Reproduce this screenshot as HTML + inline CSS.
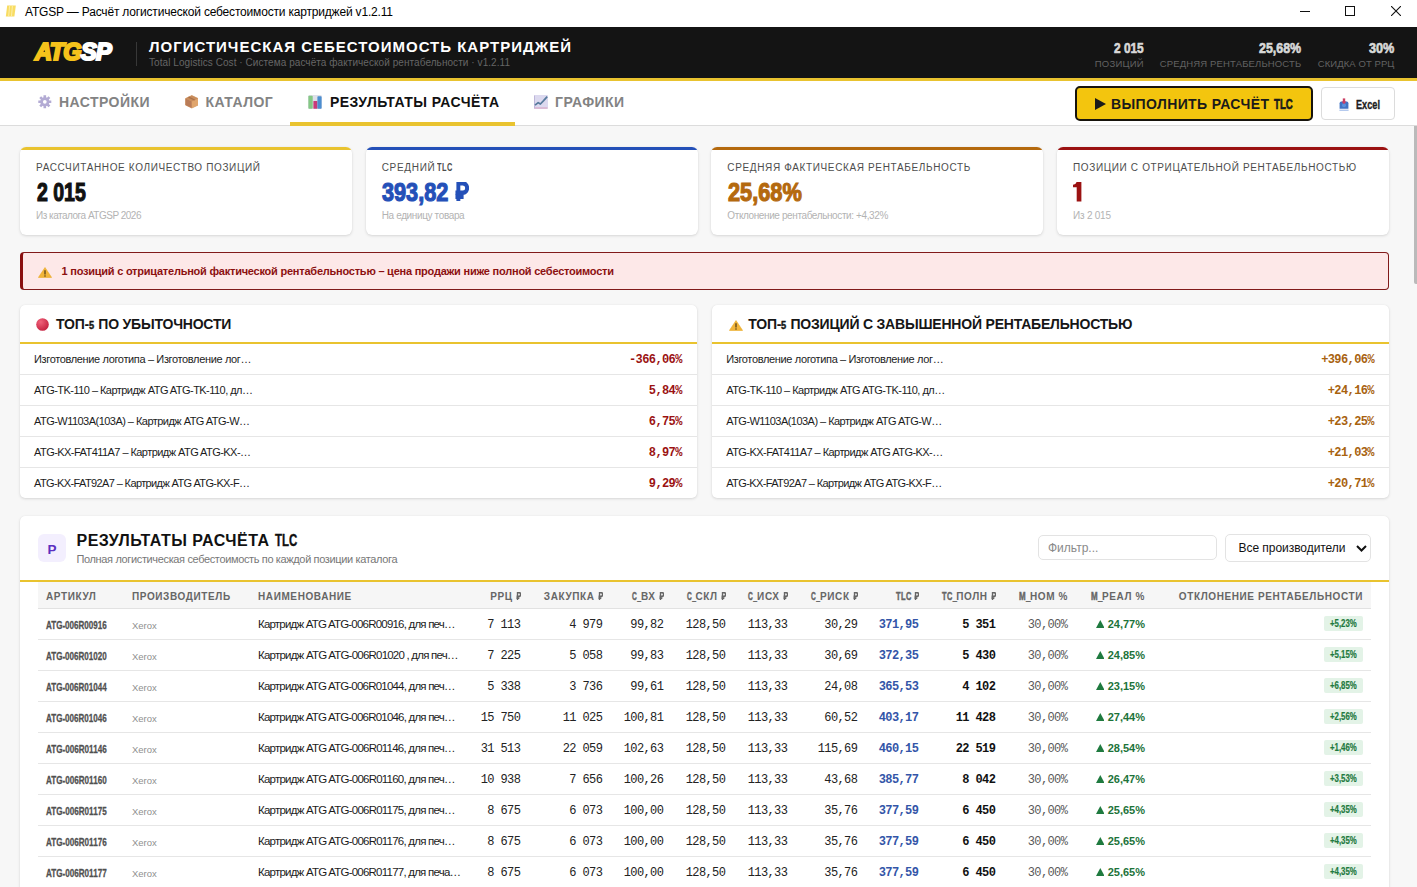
<!DOCTYPE html>
<html lang="ru">
<head>
<meta charset="utf-8">
<title>ATGSP</title>
<style>
*{box-sizing:border-box;margin:0;padding:0}
html,body{width:1417px;height:887px;overflow:hidden;background:#f7f7f7;font-family:"Liberation Sans",sans-serif;color:#111}
body{position:relative}
.a{position:absolute;white-space:nowrap}
.cn{display:inline-block;white-space:nowrap;vertical-align:baseline;overflow:visible}
.cn>span{display:inline-block;transform-origin:0 50%;white-space:nowrap}
.mono{font-family:"Liberation Mono",monospace}
svg{display:inline-block}
.rub{vertical-align:baseline}
#titlebar{left:0;top:0;width:1417px;height:27px;background:#fff}
#hdr{left:0;top:27px;width:1417px;height:54px;background:#141414;border-bottom:3px solid #e9c32f}
#tabs{left:0;top:81px;width:1417px;height:45px;background:#fff;border-bottom:1px solid #dcdcdc}
.tab{top:0;height:44px;line-height:42px;font-size:14px;font-weight:bold;color:#838383;letter-spacing:.45px;padding:0 18px}
.tab svg{position:absolute;left:18px;top:14.3px}
.tab span{margin-left:21px}
.tab.act{color:#111}
.card{top:147px;width:332px;height:88px;background:#fff;border-radius:6px;box-shadow:0 1px 3px rgba(0,0,0,.13),0 0 1px rgba(0,0,0,.08);overflow:hidden}
.card .bar{left:0;top:0;width:100%;height:3px}
.card .l{left:16px;top:14px;font-size:10px;line-height:14px;color:#4d4d4d}
.card .v{left:16px;top:30px;font-size:26px;line-height:30px;font-weight:bold}
.card .s{left:16px;top:62px;font-size:10px;line-height:13px;color:#b3b3b3}
.panel{background:#fff;border-radius:5px;box-shadow:0 1px 3px rgba(0,0,0,.13),0 0 1px rgba(0,0,0,.08)}
.ph{left:0;top:0;width:100%;height:39px;border-bottom:2px solid #e9c32f}
.ph .t{left:36px;top:10px;font-size:14px;line-height:18px;font-weight:bold;color:#161616}
.tr{left:0;width:100%;height:31px;border-bottom:1px solid #e6e6e6}
.tr .n{left:14px;top:8px;font-size:11px;line-height:14px;color:#1c1c1c}
.tr .p{right:15.4px;top:9px;font-size:12px;letter-spacing:-0.6px;line-height:14px;font-weight:bold;font-family:"Liberation Mono",monospace}
table{position:absolute;left:18px;top:67px;width:1333px;border-collapse:collapse;table-layout:fixed}
th{height:26px;padding-top:3px !important;background:#f6f6f6;border-bottom:1px solid #e2e2e2;font-size:10px;font-weight:bold;color:#666;letter-spacing:.6px;text-align:right;padding:0 8px;white-space:nowrap;overflow:visible;vertical-align:middle}
td{height:31px;border-bottom:1px solid #e6e6e6;padding:2px 8px 0;white-space:nowrap;overflow:visible;vertical-align:middle;text-align:right;font-size:11px}
th.L,td.L{text-align:left}
td.m{font-family:"Liberation Mono",monospace;font-size:12px;letter-spacing:-0.6px;color:#222;padding-top:3.4px;padding-right:8.7px}
td.art{color:#505050}
td.man{font-size:9.5px;color:#8f8f8f;padding-top:4px}
td.nm{font-size:11.5px;color:#1c1c1c;padding-top:1px}
td.tlc{color:#3355a8;font-weight:bold}
td.tc{font-weight:bold;color:#111}
td.nom{color:#5a5a5a}
td.real{font-family:"Liberation Sans",sans-serif;font-weight:bold;color:#1c733a;font-size:11px;padding-top:0.5px}
.bdg{display:inline-block;height:15px;line-height:15px;background:#e3f3e7;color:#1f7a3f;border-radius:2px;padding:0 6px;font-size:10px;font-weight:bold;vertical-align:middle}
</style>
</head>
<body>

<div id="titlebar" class="a">
<svg class="a" style="left:4.5px;top:4.5px" width="12" height="12" viewBox="0 0 12 12"><path d="M2.2 0.6h8.6l-1.4 10.8h-8.6z" fill="#f8dc62"/><path d="M4.6 1l-0.9 10M7.4 1l-0.9 10" stroke="#fdf0b0" stroke-width="0.9"/></svg>
<div class="a" style="left:25px;top:5px;font-size:12px;line-height:15px;color:#000;letter-spacing:-0.185px">ATGSP — Расчёт логистической себестоимости картриджей v1.2.11</div>
<div class="a" style="left:1300px;top:11px;width:10px;height:1px;background:#111"></div>
<div class="a" style="left:1345px;top:6px;width:10px;height:10px;border:1px solid #111"></div>
<svg class="a" style="left:1391px;top:6px" width="10" height="10" viewBox="0 0 10 10"><path d="M0 0L10 10M10 0L0 10" stroke="#111" stroke-width="1.1"/></svg>
</div>

<div id="hdr" class="a">
<div class="a" style="left:35.1px;top:11.4px;font-size:23.6px;line-height:28px;font-weight:bold;font-style:italic;color:#f5c21b;letter-spacing:-0.75px;-webkit-text-stroke:2.1px #f5c21b;paint-order:stroke fill">ATG<span style="color:#fff;-webkit-text-stroke:2.1px #fff">SP</span></div>
<div class="a" style="left:136px;top:15px;width:1px;height:24px;background:#383838"></div>
<div class="a" style="left:149px;top:11px;font-size:15px;line-height:18px;font-weight:bold;color:#fff;letter-spacing:0.999px">ЛОГИСТИЧЕСКАЯ СЕБЕСТОИМОСТЬ КАРТРИДЖЕЙ</div>
<div class="a" style="left:149px;top:30px;font-size:10px;line-height:12px;color:#666;letter-spacing:0.067px">Total Logistics Cost · Система расчёта фактической рентабельности · v1.2.11</div>
<div class="a" style="left:1113.3px;top:13px;line-height:16px;color:#d8d8d8"><span class="cn" style="width:30.40px;font-size:15px;font-weight:bold;"><span style="transform:scaleX(0.7918);margin-left:0.34px;-webkit-text-stroke:0.67px currentColor;">2 015</span></span></div>
<div class="a" style="left:1094.7px;top:30.6px;font-size:9.5px;line-height:12px;color:#626262;letter-spacing:0.255px">ПОЗИЦИЙ</div>
<div class="a" style="left:1258.4px;top:13px;line-height:16px;color:#d8d8d8"><span class="cn" style="width:42.80px;font-size:15px;font-weight:bold;"><span style="transform:scaleX(0.8281);margin-left:0.34px;-webkit-text-stroke:0.67px currentColor;">25,68%</span></span></div>
<div class="a" style="left:1159.7px;top:30.6px;font-size:9.5px;line-height:12px;color:#626262;letter-spacing:0.147px">СРЕДНЯЯ РЕНТАБЕЛЬНОСТЬ</div>
<div class="a" style="left:1368.4px;top:13px;line-height:16px;color:#d8d8d8"><span class="cn" style="width:26.00px;font-size:15px;font-weight:bold;"><span style="transform:scaleX(0.8435);margin-left:0.34px;-webkit-text-stroke:0.67px currentColor;">30%</span></span></div>
<div class="a" style="left:1317.8px;top:30.6px;font-size:9.5px;line-height:12px;color:#626262;letter-spacing:0.075px">СКИДКА ОТ РРЦ</div>
</div>

<div id="tabs" class="a">
<div class="a tab" style="left:20px"><svg width="13.6" height="13.6" viewBox="0 0 14 14"><g fill="#b3abd4" stroke="#b3abd4"><circle cx="7" cy="7" r="4.7" stroke="none"/><g stroke-width="2.7" stroke-linecap="butt"><path d="M7 0.3v13.4M0.3 7h13.4M2.26 2.26l9.48 9.48M11.74 2.26l-9.48 9.48"/></g></g><circle cx="7" cy="7" r="1.9" fill="#fff"/></svg><span>НАСТРОЙКИ</span></div>
<div class="a tab" style="left:166.5px"><svg width="13.6" height="13.6" viewBox="0 0 14 14"><path d="M7 0.6L13.4 3.6V10.4L7 13.4L0.6 10.4V3.6Z" fill="#d39a68" stroke="#d39a68" stroke-width="0.8" stroke-linejoin="round"/><path d="M0.6 3.6L7 6.6V13.4L0.6 10.4Z" fill="#b97c58"/><path d="M7 6.6L13.4 3.6V10.4L7 13.4Z" fill="#e0a56c"/><path d="M7 0.6L13.4 3.6L7 6.6L0.6 3.6Z" fill="#c88c5c"/><path d="M3.6 2.2L10 5.2" stroke="#a87048" stroke-width="1.3"/></svg><span>КАТАЛОГ</span></div>
<div class="a tab act" style="left:291px"><svg width="14" height="14" viewBox="0 0 14 14" style="margin-left:-1px"><rect x="0" y="0" width="14" height="14" rx="1.5" fill="#dfe0e8"/><rect x="0.4" y="0.8" width="4.3" height="13" rx="0.8" fill="#85c885"/><rect x="5.4" y="6" width="4" height="7.8" rx="0.6" fill="#c93a78"/><rect x="9.4" y="1.2" width="4.2" height="12.6" rx="0.8" fill="#4c8ed0"/></svg><span>РЕЗУЛЬТАТЫ РАСЧЁТА</span></div>
<div class="a tab" style="left:516px"><svg width="14" height="14" viewBox="0 0 14 14"><rect x="0" y="0" width="14" height="14" rx="1" fill="#dcd9ef"/><path d="M0.5 13h13" stroke="#d9a8c4" stroke-width="1.2"/><path d="M0.5 0.5v13" stroke="#b9b3d6" stroke-width="0.9"/><path d="M1 10.2L4.2 7.6L6.4 9L9.6 5.6L13.2 1.6" stroke="#557a9c" stroke-width="1.7" fill="none" stroke-linejoin="round"/></svg><span>ГРАФИКИ</span></div>
<div class="a" style="left:290px;top:41px;width:225px;height:4px;background:#e9c32f"></div>
<div class="a" style="left:1075.3px;top:5px;width:237.3px;height:34.6px;background:#f3c50e;border:2px solid #17140c;border-radius:5px"></div>
<svg class="a" style="left:1095px;top:17px" width="11" height="12" viewBox="0 0 11 12"><path d="M0 0L11 6L0 12Z" fill="#1a1a1a"/></svg>
<div class="a" style="left:1111px;top:14px;font-size:14px;line-height:18px;font-weight:bold;color:#1a1a1a;letter-spacing:0.379px">ВЫПОЛНИТЬ РАСЧЁТ</div>
<div class="a" style="left:1273.6px;top:14px;line-height:18px;color:#1a1a1a"><span class="cn" style="width:19.40px;font-size:14px;font-weight:bold;"><span style="transform:scaleX(0.6896);margin-left:0.32px;-webkit-text-stroke:0.63px currentColor;">TLC</span></span></div>
<div class="a" style="left:1320.5px;top:6.3px;width:74px;height:32.5px;background:#fff;border:1px solid #dcdcdc;border-radius:4px"></div>
<svg class="a" style="left:1339px;top:16.8px" width="10" height="13" viewBox="0 0 10 13"><path d="M0.6 5.2Q0.6 3.6 2.2 3.6H7.8Q9.4 3.6 9.4 5.2V10.8H0.6Z" fill="#3f72c4"/><circle cx="5" cy="7.3" r="2" fill="#5b8fdc"/><path d="M5 0.4v4.4" stroke="#cc3f63" stroke-width="2.4"/><path d="M2.6 3.4L5 6.2L7.4 3.4Z" fill="#cc3f63"/><path d="M0.4 12.2h9.2" stroke="#9db8e8" stroke-width="1.1"/></svg>
<div class="a" style="left:1356px;top:15px;line-height:16px;color:#1c1c1c"><span class="cn" style="width:24.30px;font-size:12.5px;font-weight:bold;"><span style="transform:scaleX(0.7330);margin-left:0.17px;-webkit-text-stroke:0.35px currentColor;">Excel</span></span></div>
</div>

<div class="a" style="left:1413.8px;top:126px;width:3.2px;height:157.5px;background:#bababa;border-radius:0 0 0 2px"></div>

<div class="a card" style="left:20px">
<div class="a bar" style="background:#e9c32f"></div>
<div class="a l" style="letter-spacing:0.638px">РАССЧИТАННОЕ КОЛИЧЕСТВО ПОЗИЦИЙ</div>
<div class="a v" style="color:#111"><span class="cn" style="width:50.00px;font-size:26px;font-weight:bold;"><span style="transform:scaleX(0.7503);margin-left:0.58px;-webkit-text-stroke:1.17px currentColor;">2 015</span></span></div>
<div class="a s" style="letter-spacing:-0.490px">Из каталога ATGSP 2026</div>
</div>
<div class="a card" style="left:365.7px">
<div class="a bar" style="background:#2450b8"></div>
<div class="a l" style="letter-spacing:0.677px">СРЕДНИЙ<span style="display:inline-block;width:1.5px"></span><span class="cn" style="width:14.50px;font-size:10px;font-weight:bold;"><span style="transform:scaleX(0.7454);margin-left:0.00px;">TLC</span></span></div>
<div class="a v" style="color:#2450b8"><span class="cn" style="width:67.50px;font-size:26px;font-weight:bold;"><span style="transform:scaleX(0.8340);margin-left:0.58px;-webkit-text-stroke:1.17px currentColor;">393,82</span></span><span style="display:inline-block;width:5.3px"></span><svg class="rub " viewBox="0 0 10 12" preserveAspectRatio="none" style="width:0.56em;height:0.74em" fill="none" stroke="currentColor" stroke-width="2.7" stroke-linecap="butt" stroke-linejoin="miter"><path d="M3 12V0.8H6.1a2.9 2.9 0 0 1 0 5.9H1"/><path d="M1 9.2H6.6"/></svg></div>
<div class="a s" style="letter-spacing:-0.366px">На единицу товара</div>
</div>
<div class="a card" style="left:711.3px">
<div class="a bar" style="background:#b4690e"></div>
<div class="a l" style="letter-spacing:0.638px">СРЕДНЯЯ ФАКТИЧЕСКАЯ РЕНТАБЕЛЬНОСТЬ</div>
<div class="a v" style="color:#b4690e"><span class="cn" style="width:75.00px;font-size:26px;font-weight:bold;"><span style="transform:scaleX(0.8372);margin-left:0.58px;-webkit-text-stroke:1.17px currentColor;">25,68%</span></span></div>
<div class="a s" style="letter-spacing:-0.389px">Отклонение рентабельности: +4,32%</div>
</div>
<div class="a card" style="left:1057px">
<div class="a bar" style="background:#9b1212"></div>
<div class="a l" style="letter-spacing:0.640px">ПОЗИЦИИ С ОТРИЦАТЕЛЬНОЙ РЕНТАБЕЛЬНОСТЬЮ</div>
<div class="a v" style="color:#9b1212"><svg width="8.4" height="19.6" viewBox="0 0 8.4 20" preserveAspectRatio="none" style="vertical-align:baseline;margin-left:0.4px;position:relative;top:0.9px"><path d="M3.6 0H8.4V20H3.7V5.4H0V2.7Q2.9 2.5 3.6 0Z" fill="#9b1212"/></svg></div>
<div class="a s" style="letter-spacing:-0.225px">Из 2 015</div>
</div>


<div class="a" style="left:20px;top:252px;width:1369px;height:38px;background:#fde8e8;border:1px solid #811a1a;border-left:3.5px solid #8a0f0f;border-radius:4px"></div>
<div class="a" style="left:38px;top:267px;line-height:0"><svg width="14" height="11" viewBox="0 0 14 12" preserveAspectRatio="none"><path d="M7 0.6L13.6 11.4H0.4Z" fill="#f2b53a" stroke="#e9a820" stroke-width="0.6" stroke-linejoin="round"/><path d="M7 3.6v4.6" stroke="#3a2a10" stroke-width="1.1"/><circle cx="7" cy="9.8" r="0.7" fill="#3a2a10"/></svg></div>
<div class="a" style="left:61.5px;top:264px;font-size:11px;line-height:14px;font-weight:bold;color:#8c1010;letter-spacing:-0.229px">1 позиций с отрицательной фактической рентабельностью – цена продажи ниже полной себестоимости</div>

<div class="a panel" style="left:20px;top:305px;width:677.2px;height:193.3px;overflow:hidden">
<div class="a ph">
<div class="a" style="left:16px;top:12.5px;line-height:0"><svg width="13" height="13" viewBox="0 0 13 13"><defs><radialGradient id="rg" cx="35%" cy="30%" r="75%"><stop offset="0" stop-color="#f0627a"/><stop offset="1" stop-color="#c4203f"/></radialGradient></defs><circle cx="6.5" cy="6.5" r="6.3" fill="url(#rg)"/></svg></div>
<div class="a t"><span style="letter-spacing:-0.2px">ТОП-</span><span class="cn" style="width:5.60px;font-size:10.5px;font-weight:bold;"><span style="transform:scaleX(0.8779);margin-left:0.23px;-webkit-text-stroke:0.47px currentColor;">5</span></span><span style="letter-spacing:-0.2px"> ПО УБЫТОЧНОСТИ</span></div>
</div>
<div class="a tr" style="top:39px;"><div class="a n" style="letter-spacing:-0.357px">Изготовление логотипа – Изготовление лог…</div><div class="a p" style="color:#9b1212">-366,06%</div></div>
<div class="a tr" style="top:70px;"><div class="a n" style="letter-spacing:-0.535px">ATG-TK-110 – Картридж ATG ATG-TK-110, дл…</div><div class="a p" style="color:#9b1212">5,84%</div></div>
<div class="a tr" style="top:101px;"><div class="a n" style="letter-spacing:-0.533px">ATG-W1103A(103A) – Картридж ATG ATG-W…</div><div class="a p" style="color:#9b1212">6,75%</div></div>
<div class="a tr" style="top:132px;"><div class="a n" style="letter-spacing:-0.551px">ATG-KX-FAT411A7 – Картридж ATG ATG-KX-…</div><div class="a p" style="color:#9b1212">8,97%</div></div>
<div class="a tr" style="top:163px;border-bottom:none;"><div class="a n" style="letter-spacing:-0.615px">ATG-KX-FAT92A7 – Картридж ATG ATG-KX-F…</div><div class="a p" style="color:#9b1212">9,29%</div></div>
</div>
<div class="a panel" style="left:712.2px;top:305px;width:677.2px;height:193.3px;overflow:hidden">
<div class="a ph">
<div class="a" style="left:17px;top:14.5px;line-height:0"><svg width="14" height="11" viewBox="0 0 14 12" preserveAspectRatio="none"><path d="M7 0.6L13.6 11.4H0.4Z" fill="#f2b53a" stroke="#e9a820" stroke-width="0.6" stroke-linejoin="round"/><path d="M7 3.6v4.6" stroke="#3a2a10" stroke-width="1.1"/><circle cx="7" cy="9.8" r="0.7" fill="#3a2a10"/></svg></div>
<div class="a t"><span style="letter-spacing:-0.2px">ТОП-</span><span class="cn" style="width:5.60px;font-size:10.5px;font-weight:bold;"><span style="transform:scaleX(0.8779);margin-left:0.23px;-webkit-text-stroke:0.47px currentColor;">5</span></span><span style="letter-spacing:-0.2px"> ПОЗИЦИЙ С ЗАВЫШЕННОЙ РЕНТАБЕЛЬНОСТЬЮ</span></div>
</div>
<div class="a tr" style="top:39px;"><div class="a n" style="letter-spacing:-0.357px">Изготовление логотипа – Изготовление лог…</div><div class="a p" style="color:#a8620f">+396,06%</div></div>
<div class="a tr" style="top:70px;"><div class="a n" style="letter-spacing:-0.535px">ATG-TK-110 – Картридж ATG ATG-TK-110, дл…</div><div class="a p" style="color:#a8620f">+24,16%</div></div>
<div class="a tr" style="top:101px;"><div class="a n" style="letter-spacing:-0.533px">ATG-W1103A(103A) – Картридж ATG ATG-W…</div><div class="a p" style="color:#a8620f">+23,25%</div></div>
<div class="a tr" style="top:132px;"><div class="a n" style="letter-spacing:-0.551px">ATG-KX-FAT411A7 – Картридж ATG ATG-KX-…</div><div class="a p" style="color:#a8620f">+21,03%</div></div>
<div class="a tr" style="top:163px;border-bottom:none;"><div class="a n" style="letter-spacing:-0.615px">ATG-KX-FAT92A7 – Картридж ATG ATG-KX-F…</div><div class="a p" style="color:#a8620f">+20,71%</div></div>
</div>


<div class="a panel" style="left:20px;top:516px;width:1369px;height:400px">
<div class="a" style="left:18.3px;top:17.8px;width:27.5px;height:28px;border-radius:6px;background:#f3effe;color:#5b2fc0;font-size:13.5px;font-weight:bold;line-height:32px;text-align:center">P</div>
<div class="a" style="left:56.5px;top:15px;font-size:16px;line-height:20px;font-weight:bold;color:#111;letter-spacing:0.472px">РЕЗУЛЬТАТЫ РАСЧЁТА</div>
<div class="a" style="left:254.7px;top:15px;line-height:20px;color:#111"><span class="cn" style="width:22.60px;font-size:16px;font-weight:bold;"><span style="transform:scaleX(0.7136);margin-left:0.20px;-webkit-text-stroke:0.4px currentColor;">TLC</span></span></div>
<div class="a" style="left:56.5px;top:36px;font-size:11px;line-height:14px;color:#777;letter-spacing:-0.360px">Полная логистическая себестоимость по каждой позиции каталога</div>
<div class="a" style="left:1017.5px;top:19px;width:179px;height:25px;border:1px solid #e3e3e3;border-radius:5px;background:#fff"></div>
<div class="a" style="left:1028px;top:25px;font-size:12px;line-height:15px;color:#8a8a8a;letter-spacing:0px">Фильтр...</div>
<div class="a" style="left:1205px;top:18px;width:145.5px;height:27.5px;border:1px solid #e3e3e3;border-radius:5px;background:#fff"></div>
<div class="a" style="left:1218.5px;top:25px;font-size:12px;line-height:15px;color:#111;letter-spacing:-0.048px">Все производители</div>
<svg class="a" style="left:1336px;top:28.5px" width="11" height="7" viewBox="0 0 11 7"><path d="M1 1L5.5 5.5L10 1" stroke="#111" stroke-width="2" fill="none"/></svg>
<div class="a" style="left:0;top:64px;width:1369px;height:2px;background:#e9c32f"></div>
<table style="top:66px"><colgroup><col style="width:86px"><col style="width:126px"><col style="width:220px"><col style="width:59px"><col style="width:82px"><col style="width:61px"><col style="width:62px"><col style="width:62px"><col style="width:70px"><col style="width:61px"><col style="width:77px"><col style="width:72px"><col style="width:77px"><col style="width:218px"></colgroup>
<tr><th class="L">АРТИКУЛ</th><th class="L">ПРОИЗВОДИТЕЛЬ</th><th class="L">НАИМЕНОВАНИЕ</th><th class="">РРЦ <svg class="rub " viewBox="0 0 10 12" preserveAspectRatio="none" style="width:0.5em;height:0.8em" fill="none" stroke="currentColor" stroke-width="2.7" stroke-linecap="butt" stroke-linejoin="miter"><path d="M3 12V0.8H6.1a2.9 2.9 0 0 1 0 5.9H1"/><path d="M1 9.2H6.6"/></svg></th><th class="">ЗАКУПКА <svg class="rub " viewBox="0 0 10 12" preserveAspectRatio="none" style="width:0.5em;height:0.8em" fill="none" stroke="currentColor" stroke-width="2.7" stroke-linecap="butt" stroke-linejoin="miter"><path d="M3 12V0.8H6.1a2.9 2.9 0 0 1 0 5.9H1"/><path d="M1 9.2H6.6"/></svg></th><th class=""><span class="cn" style="width:9.00px;font-size:10px;font-weight:bold;"><span style="transform:scaleX(0.6681);margin-left:0.23px;-webkit-text-stroke:0.45px currentColor;">C_</span></span>ВХ <svg class="rub " viewBox="0 0 10 12" preserveAspectRatio="none" style="width:0.5em;height:0.8em" fill="none" stroke="currentColor" stroke-width="2.7" stroke-linecap="butt" stroke-linejoin="miter"><path d="M3 12V0.8H6.1a2.9 2.9 0 0 1 0 5.9H1"/><path d="M1 9.2H6.6"/></svg></th><th class=""><span class="cn" style="width:9.00px;font-size:10px;font-weight:bold;"><span style="transform:scaleX(0.6681);margin-left:0.23px;-webkit-text-stroke:0.45px currentColor;">C_</span></span>СКЛ <svg class="rub " viewBox="0 0 10 12" preserveAspectRatio="none" style="width:0.5em;height:0.8em" fill="none" stroke="currentColor" stroke-width="2.7" stroke-linecap="butt" stroke-linejoin="miter"><path d="M3 12V0.8H6.1a2.9 2.9 0 0 1 0 5.9H1"/><path d="M1 9.2H6.6"/></svg></th><th class=""><span class="cn" style="width:9.00px;font-size:10px;font-weight:bold;"><span style="transform:scaleX(0.6681);margin-left:0.23px;-webkit-text-stroke:0.45px currentColor;">C_</span></span>ИСХ <svg class="rub " viewBox="0 0 10 12" preserveAspectRatio="none" style="width:0.5em;height:0.8em" fill="none" stroke="currentColor" stroke-width="2.7" stroke-linecap="butt" stroke-linejoin="miter"><path d="M3 12V0.8H6.1a2.9 2.9 0 0 1 0 5.9H1"/><path d="M1 9.2H6.6"/></svg></th><th class=""><span class="cn" style="width:9.00px;font-size:10px;font-weight:bold;"><span style="transform:scaleX(0.6681);margin-left:0.23px;-webkit-text-stroke:0.45px currentColor;">C_</span></span>РИСК <svg class="rub " viewBox="0 0 10 12" preserveAspectRatio="none" style="width:0.5em;height:0.8em" fill="none" stroke="currentColor" stroke-width="2.7" stroke-linecap="butt" stroke-linejoin="miter"><path d="M3 12V0.8H6.1a2.9 2.9 0 0 1 0 5.9H1"/><path d="M1 9.2H6.6"/></svg></th><th class=""><span class="cn" style="width:15.00px;font-size:10px;font-weight:bold;"><span style="transform:scaleX(0.7480);margin-left:0.23px;-webkit-text-stroke:0.45px currentColor;">TLC</span></span> <svg class="rub " viewBox="0 0 10 12" preserveAspectRatio="none" style="width:0.5em;height:0.8em" fill="none" stroke="currentColor" stroke-width="2.7" stroke-linecap="butt" stroke-linejoin="miter"><path d="M3 12V0.8H6.1a2.9 2.9 0 0 1 0 5.9H1"/><path d="M1 9.2H6.6"/></svg></th><th class=""><span class="cn" style="width:14.50px;font-size:10px;font-weight:bold;"><span style="transform:scaleX(0.7431);margin-left:0.23px;-webkit-text-stroke:0.45px currentColor;">TC_</span></span>ПОЛН <svg class="rub " viewBox="0 0 10 12" preserveAspectRatio="none" style="width:0.5em;height:0.8em" fill="none" stroke="currentColor" stroke-width="2.7" stroke-linecap="butt" stroke-linejoin="miter"><path d="M3 12V0.8H6.1a2.9 2.9 0 0 1 0 5.9H1"/><path d="M1 9.2H6.6"/></svg></th><th class=""><span class="cn" style="width:11.50px;font-size:10px;font-weight:bold;"><span style="transform:scaleX(0.7946);margin-left:0.23px;-webkit-text-stroke:0.45px currentColor;">M_</span></span>НОМ %</th><th class=""><span class="cn" style="width:11.50px;font-size:10px;font-weight:bold;"><span style="transform:scaleX(0.7946);margin-left:0.23px;-webkit-text-stroke:0.45px currentColor;">M_</span></span>РЕАЛ %</th><th class="">ОТКЛОНЕНИЕ РЕНТАБЕЛЬНОСТИ</th></tr>
<tr><td class="L art"><span class="cn" style="width:61.00px;font-size:11.5px;font-weight:bold;"><span style="transform:scaleX(0.6998);margin-left:0.15px;-webkit-text-stroke:0.3px currentColor;">ATG-006R00916</span></span></td><td class="L man">Xerox</td><td class="L nm" style="letter-spacing:-0.795px">Картридж ATG ATG-006R00916, для печ…</td><td class="m">7 113</td><td class="m">4 979</td><td class="m">99,82</td><td class="m">128,50</td><td class="m">113,33</td><td class="m">30,29</td><td class="m tlc">371,95</td><td class="m tc">5 351</td><td class="m nom">30,00%</td><td class="real"><svg width="8.6" height="8" viewBox="0 0 8.6 8" style="margin-right:3.4px"><path d="M4.3 0L8.6 8H0Z" fill="#1f7a3f"/></svg>24,77%</td><td style="padding-top:0"><span class="bdg"><span class="cn" style="width:27.00px;font-size:10px;font-weight:bold;"><span style="transform:scaleX(0.7836);margin-left:0.10px;-webkit-text-stroke:0.2px currentColor;">+5,23%</span></span></span></td></tr>
<tr><td class="L art"><span class="cn" style="width:61.00px;font-size:11.5px;font-weight:bold;"><span style="transform:scaleX(0.6998);margin-left:0.15px;-webkit-text-stroke:0.3px currentColor;">ATG-006R01020</span></span></td><td class="L man">Xerox</td><td class="L nm" style="letter-spacing:-0.779px">Картридж ATG ATG-006R01020 , для печ…</td><td class="m">7 225</td><td class="m">5 058</td><td class="m">99,83</td><td class="m">128,50</td><td class="m">113,33</td><td class="m">30,69</td><td class="m tlc">372,35</td><td class="m tc">5 430</td><td class="m nom">30,00%</td><td class="real"><svg width="8.6" height="8" viewBox="0 0 8.6 8" style="margin-right:3.4px"><path d="M4.3 0L8.6 8H0Z" fill="#1f7a3f"/></svg>24,85%</td><td style="padding-top:0"><span class="bdg"><span class="cn" style="width:27.00px;font-size:10px;font-weight:bold;"><span style="transform:scaleX(0.7836);margin-left:0.10px;-webkit-text-stroke:0.2px currentColor;">+5,15%</span></span></span></td></tr>
<tr><td class="L art"><span class="cn" style="width:61.00px;font-size:11.5px;font-weight:bold;"><span style="transform:scaleX(0.6998);margin-left:0.15px;-webkit-text-stroke:0.3px currentColor;">ATG-006R01044</span></span></td><td class="L man">Xerox</td><td class="L nm" style="letter-spacing:-0.795px">Картридж ATG ATG-006R01044, для печ…</td><td class="m">5 338</td><td class="m">3 736</td><td class="m">99,61</td><td class="m">128,50</td><td class="m">113,33</td><td class="m">24,08</td><td class="m tlc">365,53</td><td class="m tc">4 102</td><td class="m nom">30,00%</td><td class="real"><svg width="8.6" height="8" viewBox="0 0 8.6 8" style="margin-right:3.4px"><path d="M4.3 0L8.6 8H0Z" fill="#1f7a3f"/></svg>23,15%</td><td style="padding-top:0"><span class="bdg"><span class="cn" style="width:27.00px;font-size:10px;font-weight:bold;"><span style="transform:scaleX(0.7836);margin-left:0.10px;-webkit-text-stroke:0.2px currentColor;">+6,85%</span></span></span></td></tr>
<tr><td class="L art"><span class="cn" style="width:61.00px;font-size:11.5px;font-weight:bold;"><span style="transform:scaleX(0.6998);margin-left:0.15px;-webkit-text-stroke:0.3px currentColor;">ATG-006R01046</span></span></td><td class="L man">Xerox</td><td class="L nm" style="letter-spacing:-0.795px">Картридж ATG ATG-006R01046, для печ…</td><td class="m">15 750</td><td class="m">11 025</td><td class="m">100,81</td><td class="m">128,50</td><td class="m">113,33</td><td class="m">60,52</td><td class="m tlc">403,17</td><td class="m tc">11 428</td><td class="m nom">30,00%</td><td class="real"><svg width="8.6" height="8" viewBox="0 0 8.6 8" style="margin-right:3.4px"><path d="M4.3 0L8.6 8H0Z" fill="#1f7a3f"/></svg>27,44%</td><td style="padding-top:0"><span class="bdg"><span class="cn" style="width:27.00px;font-size:10px;font-weight:bold;"><span style="transform:scaleX(0.7836);margin-left:0.10px;-webkit-text-stroke:0.2px currentColor;">+2,56%</span></span></span></td></tr>
<tr><td class="L art"><span class="cn" style="width:61.00px;font-size:11.5px;font-weight:bold;"><span style="transform:scaleX(0.7050);margin-left:0.15px;-webkit-text-stroke:0.3px currentColor;">ATG-006R01146</span></span></td><td class="L man">Xerox</td><td class="L nm" style="letter-spacing:-0.771px">Картридж ATG ATG-006R01146, для печ…</td><td class="m">31 513</td><td class="m">22 059</td><td class="m">102,63</td><td class="m">128,50</td><td class="m">113,33</td><td class="m">115,69</td><td class="m tlc">460,15</td><td class="m tc">22 519</td><td class="m nom">30,00%</td><td class="real"><svg width="8.6" height="8" viewBox="0 0 8.6 8" style="margin-right:3.4px"><path d="M4.3 0L8.6 8H0Z" fill="#1f7a3f"/></svg>28,54%</td><td style="padding-top:0"><span class="bdg"><span class="cn" style="width:27.00px;font-size:10px;font-weight:bold;"><span style="transform:scaleX(0.7836);margin-left:0.10px;-webkit-text-stroke:0.2px currentColor;">+1,46%</span></span></span></td></tr>
<tr><td class="L art"><span class="cn" style="width:61.00px;font-size:11.5px;font-weight:bold;"><span style="transform:scaleX(0.7050);margin-left:0.15px;-webkit-text-stroke:0.3px currentColor;">ATG-006R01160</span></span></td><td class="L man">Xerox</td><td class="L nm" style="letter-spacing:-0.771px">Картридж ATG ATG-006R01160, для печ…</td><td class="m">10 938</td><td class="m">7 656</td><td class="m">100,26</td><td class="m">128,50</td><td class="m">113,33</td><td class="m">43,68</td><td class="m tlc">385,77</td><td class="m tc">8 042</td><td class="m nom">30,00%</td><td class="real"><svg width="8.6" height="8" viewBox="0 0 8.6 8" style="margin-right:3.4px"><path d="M4.3 0L8.6 8H0Z" fill="#1f7a3f"/></svg>26,47%</td><td style="padding-top:0"><span class="bdg"><span class="cn" style="width:27.00px;font-size:10px;font-weight:bold;"><span style="transform:scaleX(0.7836);margin-left:0.10px;-webkit-text-stroke:0.2px currentColor;">+3,53%</span></span></span></td></tr>
<tr><td class="L art"><span class="cn" style="width:61.00px;font-size:11.5px;font-weight:bold;"><span style="transform:scaleX(0.7050);margin-left:0.15px;-webkit-text-stroke:0.3px currentColor;">ATG-006R01175</span></span></td><td class="L man">Xerox</td><td class="L nm" style="letter-spacing:-0.771px">Картридж ATG ATG-006R01175, для печ…</td><td class="m">8 675</td><td class="m">6 073</td><td class="m">100,00</td><td class="m">128,50</td><td class="m">113,33</td><td class="m">35,76</td><td class="m tlc">377,59</td><td class="m tc">6 450</td><td class="m nom">30,00%</td><td class="real"><svg width="8.6" height="8" viewBox="0 0 8.6 8" style="margin-right:3.4px"><path d="M4.3 0L8.6 8H0Z" fill="#1f7a3f"/></svg>25,65%</td><td style="padding-top:0"><span class="bdg"><span class="cn" style="width:27.00px;font-size:10px;font-weight:bold;"><span style="transform:scaleX(0.7836);margin-left:0.10px;-webkit-text-stroke:0.2px currentColor;">+4,35%</span></span></span></td></tr>
<tr><td class="L art"><span class="cn" style="width:61.00px;font-size:11.5px;font-weight:bold;"><span style="transform:scaleX(0.7050);margin-left:0.15px;-webkit-text-stroke:0.3px currentColor;">ATG-006R01176</span></span></td><td class="L man">Xerox</td><td class="L nm" style="letter-spacing:-0.771px">Картридж ATG ATG-006R01176, для печ…</td><td class="m">8 675</td><td class="m">6 073</td><td class="m">100,00</td><td class="m">128,50</td><td class="m">113,33</td><td class="m">35,76</td><td class="m tlc">377,59</td><td class="m tc">6 450</td><td class="m nom">30,00%</td><td class="real"><svg width="8.6" height="8" viewBox="0 0 8.6 8" style="margin-right:3.4px"><path d="M4.3 0L8.6 8H0Z" fill="#1f7a3f"/></svg>25,65%</td><td style="padding-top:0"><span class="bdg"><span class="cn" style="width:27.00px;font-size:10px;font-weight:bold;"><span style="transform:scaleX(0.7836);margin-left:0.10px;-webkit-text-stroke:0.2px currentColor;">+4,35%</span></span></span></td></tr>
<tr><td class="L art"><span class="cn" style="width:61.00px;font-size:11.5px;font-weight:bold;"><span style="transform:scaleX(0.7050);margin-left:0.15px;-webkit-text-stroke:0.3px currentColor;">ATG-006R01177</span></span></td><td class="L man">Xerox</td><td class="L nm" style="letter-spacing:-0.774px">Картридж ATG ATG-006R01177, для печа…</td><td class="m">8 675</td><td class="m">6 073</td><td class="m">100,00</td><td class="m">128,50</td><td class="m">113,33</td><td class="m">35,76</td><td class="m tlc">377,59</td><td class="m tc">6 450</td><td class="m nom">30,00%</td><td class="real"><svg width="8.6" height="8" viewBox="0 0 8.6 8" style="margin-right:3.4px"><path d="M4.3 0L8.6 8H0Z" fill="#1f7a3f"/></svg>25,65%</td><td style="padding-top:0"><span class="bdg"><span class="cn" style="width:27.00px;font-size:10px;font-weight:bold;"><span style="transform:scaleX(0.7836);margin-left:0.10px;-webkit-text-stroke:0.2px currentColor;">+4,35%</span></span></span></td></tr>
</table>
</div>

</body>
</html>
